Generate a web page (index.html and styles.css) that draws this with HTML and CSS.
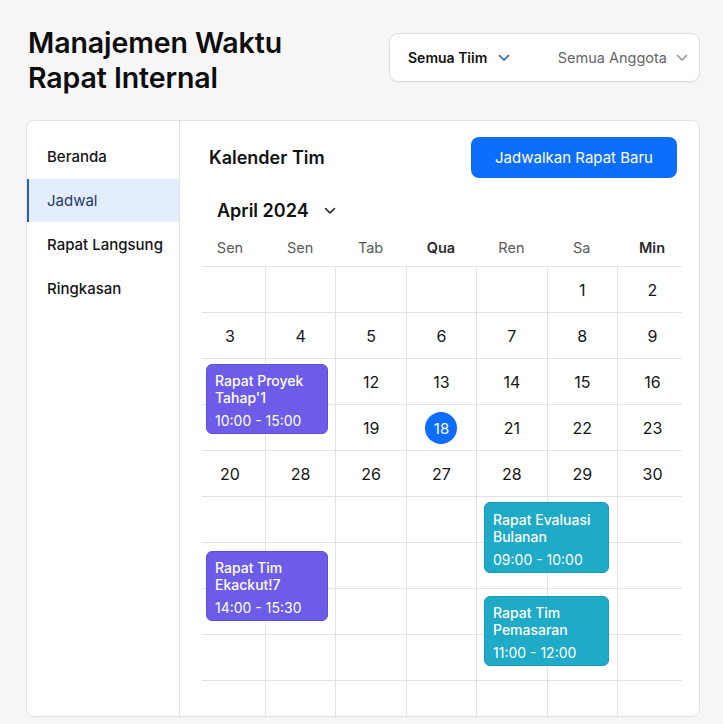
FILE: index.html
```html
<!DOCTYPE html>
<html lang="id">
<head>
<meta charset="utf-8">
<title>Manajemen Waktu Rapat Internal</title>
<link rel="stylesheet" href="styles.css">
</head>
<body>
<header class="top">
  <h1 class="title">Manajemen Waktu<br>Rapat Internal</h1>
  <div class="filters">
    <div class="filter filter-team">
      <span>Semua Tiim</span>
      <svg class="chev" width="12" height="8" viewBox="0 0 12 8"><path d="M1.5 1.5 L6 6 L10.5 1.5" fill="none" stroke="#2461a8" stroke-width="1.6" stroke-linecap="round" stroke-linejoin="round"/></svg>
    </div>
    <div class="filter filter-member">
      <span>Semua Anggota</span>
      <svg class="chev" width="12" height="8" viewBox="0 0 12 8"><path d="M1.5 1.5 L6 6 L10.5 1.5" fill="none" stroke="#8a8a8a" stroke-width="1.4" stroke-linecap="round" stroke-linejoin="round"/></svg>
    </div>
  </div>
</header>

<main class="card">
  <nav class="sidebar">
    <a class="nav-item">Beranda</a>
    <a class="nav-item active">Jadwal</a>
    <a class="nav-item">Rapat Langsung</a>
    <a class="nav-item">Ringkasan</a>
  </nav>
  <section class="content">
    <div class="content-head">
      <h2 class="section-title">Kalender Tim</h2>
      <button class="btn-primary">Jadwalkan Rapat Baru</button>
    </div>
    <div class="month">
      <span>April 2024</span>
      <svg width="12" height="8" viewBox="0 0 12 8"><path d="M1.5 1.5 L6 6 L10.5 1.5" fill="none" stroke="#222" stroke-width="1.6" stroke-linecap="round" stroke-linejoin="round"/></svg>
    </div>
    <div class="weekdays">
      <div class="wd c1">Sen</div>
      <div class="wd">Sen</div>
      <div class="wd">Tab</div>
      <div class="wd strong">Qua</div>
      <div class="wd">Ren</div>
      <div class="wd">Sa</div>
      <div class="wd strong c7">Min</div>
    </div>
    <div class="grid">
      <div class="cell c1"></div><div class="cell"></div><div class="cell"></div><div class="cell"></div><div class="cell"></div><div class="cell">1</div><div class="cell c7">2</div>
      <div class="cell c1">3</div><div class="cell">4</div><div class="cell">5</div><div class="cell">6</div><div class="cell">7</div><div class="cell">8</div><div class="cell c7">9</div>
      <div class="cell c1"></div><div class="cell"></div><div class="cell">12</div><div class="cell">13</div><div class="cell">14</div><div class="cell">15</div><div class="cell c7">16</div>
      <div class="cell c1"></div><div class="cell"></div><div class="cell">19</div><div class="cell"><span class="today">18</span></div><div class="cell">21</div><div class="cell">22</div><div class="cell c7">23</div>
      <div class="cell c1">20</div><div class="cell">28</div><div class="cell">26</div><div class="cell">27</div><div class="cell">28</div><div class="cell">29</div><div class="cell c7">30</div>
      <div class="cell c1"></div><div class="cell"></div><div class="cell"></div><div class="cell"></div><div class="cell"></div><div class="cell"></div><div class="cell c7"></div>
      <div class="cell c1"></div><div class="cell"></div><div class="cell"></div><div class="cell"></div><div class="cell"></div><div class="cell"></div><div class="cell c7"></div>
      <div class="cell c1"></div><div class="cell"></div><div class="cell"></div><div class="cell"></div><div class="cell"></div><div class="cell"></div><div class="cell c7"></div>
      <div class="cell c1"></div><div class="cell"></div><div class="cell"></div><div class="cell"></div><div class="cell"></div><div class="cell"></div><div class="cell c7"></div>
      <div class="cell c1"></div><div class="cell"></div><div class="cell"></div><div class="cell"></div><div class="cell"></div><div class="cell"></div><div class="cell c7"></div>

      <div class="event purple ev1">
        <div class="ev-title">Rapat Proyek<br>Tahap'1</div>
        <div class="ev-time">10:00 - 15:00</div>
      </div>
      <div class="event purple ev2">
        <div class="ev-title">Rapat Tim<br>Ekackut!7</div>
        <div class="ev-time">14:00 - 15:30</div>
      </div>
      <div class="event teal ev3">
        <div class="ev-title">Rapat Evaluasi<br>Bulanan</div>
        <div class="ev-time">09:00 - 10:00</div>
      </div>
      <div class="event teal ev4">
        <div class="ev-title">Rapat Tim<br>Pemasaran</div>
        <div class="ev-time">11:00 - 12:00</div>
      </div>
    </div>
  </section>
</main>
</body>
</html>
```

FILE: styles.css
```css
* { box-sizing: border-box; }

html, body {
  margin: 0;
  padding: 0;
}

body {
  background: #f6f6f7;
  font-family: Inter, "Noto Sans", "Liberation Sans", sans-serif;
  color: #111;
  width: 723px;
  height: 724px;
  overflow: hidden;
}

.top {
  display: flex;
  justify-content: space-between;
  align-items: flex-start;
  padding: 25px 23px 0 28px;
  height: 120px;
}

.title {
  margin: 0;
  font-size: 28.5px;
  font-weight: 600;
  line-height: 35px;
  letter-spacing: -0.1px;
  color: #0d0d0d;
}

.filters {
  margin-top: 8px;
  width: 311px;
  height: 49px;
  background: #fff;
  border: 1px solid #dedede;
  border-radius: 9px;
  box-shadow: 0 1px 2px rgba(0,0,0,0.04);
  display: flex;
  align-items: center;
  padding: 0 11px 0 18px;
  justify-content: space-between;
}

.filter {
  display: flex;
  align-items: center;
}

.filter-team span {
  font-size: 14px;
  font-weight: 600;
  color: #111;
}
.filter-team .chev { margin-left: 11px; }

.filter-member span {
  font-size: 14.5px;
  font-weight: 400;
  color: #666;
}
.filter-member .chev { margin-left: 9px; }

.card {
  margin: 0 23px 0 26px;
  height: 597px;
  background: #fff;
  border: 1px solid #e2e2e2;
  border-radius: 8px;
  display: flex;
  overflow: hidden;
}

.sidebar {
  width: 153px;
  flex: none;
  border-right: 1px solid #e4e4e4;
  padding-top: 13px;
  display: flex;
  flex-direction: column;
}

.nav-item {
  display: flex;
  align-items: center;
  height: 44px;
  padding-left: 20px;
  font-size: 15px;
  font-weight: 500;
  color: #151515;
}

.nav-item.active {
  background: #e3edfb;
  border-left: 2px solid #2b5fb3;
  padding-left: 18px;
  color: #1f3a6b;
  font-weight: 400;
  height: 43px;
  margin-top: 1px;
}

.content {
  flex: 1;
  position: relative;
  padding: 16px 0 0 0;
}

.content-head {
  display: flex;
  justify-content: space-between;
  align-items: center;
  padding: 0 22px 0 29px;
  height: 41px;
}

.section-title {
  margin: 0;
  font-size: 18px;
  font-weight: 600;
  color: #111;
}

.btn-primary {
  width: 206px;
  height: 41px;
  border: none;
  border-radius: 8px;
  background: #0d6efd;
  color: #fff;
  font-family: inherit;
  font-size: 15px;
  font-weight: 400;
}

.month {
  display: flex;
  align-items: center;
  gap: 15px;
  margin: 16px 0 0 37px;
  height: 32px;
}
.month span {
  font-size: 18px;
  font-weight: 600;
  color: #111;
}
.month svg { margin-top: 1px; }

.weekdays {
  display: grid;
  grid-template-columns: 63px repeat(5, 1fr) 65px;
  margin: 0 17px 0 22px;
  height: 40px;
  padding-top: 2px;
  align-items: center;
}

.wd {
  text-align: center;
  font-size: 14.5px;
  color: #5a5a5a;
}
.wd.strong {
  color: #2a2a2a;
  font-weight: 600;
}
.wd.c1 { padding-right: 7px; }
.wd.c7 { padding-left: 5px; }

.grid {
  position: relative;
  display: grid;
  grid-template-columns: 63px repeat(5, 1fr) 65px;
  grid-auto-rows: 46px;
  margin: 0 17px 0 22px;
}

.cell {
  border-top: 1px solid #e3e3e3;
  border-left: 1px solid #e3e3e3;
  display: flex;
  align-items: center;
  justify-content: center;
  font-size: 16px;
  color: #151515;
  padding-top: 1px;
}
.cell.c1 {
  border-left: none;
  padding-right: 7px;
}
.cell.c7 {
  padding-left: 5px;
}

.today {
  width: 32px;
  height: 32px;
  border-radius: 50%;
  background: #0d6efd;
  color: #fff;
  font-size: 15px;
  display: flex;
  align-items: center;
  justify-content: center;
}

.event {
  position: absolute;
  border-radius: 6px;
  color: #fff;
  padding: 7px 8px;
  font-size: 14px;
}
.ev-title {
  line-height: 17px;
  font-weight: 500;
}
.ev-time {
  margin-top: 6px;
  line-height: 17px;
}

.purple {
  background: #6c5ce7;
  border: 1px solid #5f4fdc;
}
.teal {
  background: #1faac7;
  border: 1px solid #1a9ab6;
}

.ev1 { left: 4px; top: 98px; width: 122px; height: 70px; }
.ev2 { left: 4px; top: 285px; width: 122px; height: 70px; }
.ev3 { left: 282px; top: 236px; width: 125px; height: 71px; padding-top: 8px; }
.ev4 { left: 282px; top: 330px; width: 125px; height: 70px; }
```
